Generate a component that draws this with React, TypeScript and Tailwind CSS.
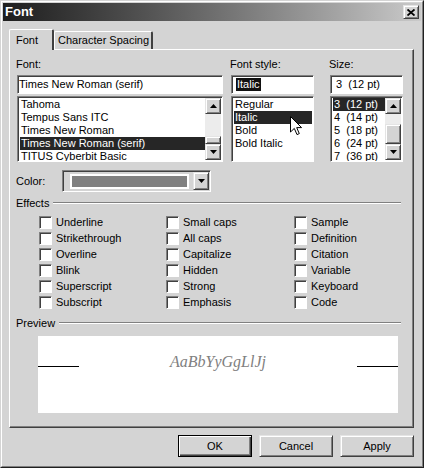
import React from "react";

const raised =
  "bg-[#d4d4d4] border border-t-[#e4e4e4] border-l-[#e4e4e4] border-r-[#404040] border-b-[#404040] shadow-[inset_1px_1px_0_#ffffff,inset_-1px_-1px_0_#808080]";
const sunken =
  "bg-white border border-t-[#808080] border-l-[#808080] border-r-white border-b-white shadow-[inset_1px_1px_0_#404040]";

function Up() {
  return (
    <svg width="7" height="4" viewBox="0 0 7 4">
      <path d="M3.5 0 L7 4 L0 4 Z" fill="#000" />
    </svg>
  );
}
function Down() {
  return (
    <svg width="7" height="4" viewBox="0 0 7 4">
      <path d="M0 0 L7 0 L3.5 4 Z" fill="#000" />
    </svg>
  );
}

function ScrollBar({ before, thumb }: { before: number; thumb: number }) {
  return (
    <div className="w-[16px] h-full flex flex-col shrink-0">
      <div className={`${raised} h-[16px] flex items-center justify-center shrink-0`}>
        <Up />
      </div>
      <div className="bg-[#ececec]" style={{ height: before }} />
      <div className={`${raised} shrink-0`} style={{ height: thumb }} />
      <div className="bg-[#ececec] flex-1" />
      <div className={`${raised} h-[16px] flex items-center justify-center shrink-0`}>
        <Down />
      </div>
    </div>
  );
}

function ListBox({
  items,
  selected,
  scroll,
  width,
}: {
  items: string[];
  selected: number;
  scroll?: { before: number; thumb: number };
  width: string;
}) {
  return (
    <div className={`${sunken} ${width} h-[66px] mt-[2px] p-[1px] pl-[1px] flex overflow-hidden`}>
      <div className="flex-1 flex flex-col pl-[1px]">
        {items.map((t, i) => (
          <div
            key={t}
            className={`h-[13px] leading-[13px] pl-[1px] whitespace-pre ${
              i === selected ? "bg-[#262626] text-white" : "text-black"
            }`}
          >
            {t}
          </div>
        ))}
      </div>
      {scroll && <ScrollBar before={scroll.before} thumb={scroll.thumb} />}
    </div>
  );
}

function Check({ label }: { label: string }) {
  return (
    <div className="h-[16px] flex items-center">
      <div className="w-[13px] h-[13px] bg-white border border-t-[#808080] border-l-[#808080] border-r-white border-b-white shadow-[inset_1px_1px_0_#404040]" />
      <span className="ml-[4px]">{label}</span>
    </div>
  );
}

function Btn({ label, def }: { label: string; def?: boolean }) {
  return (
    <div
      className={`w-[74px] h-[22px] flex items-center justify-center ${
        def
          ? "bg-[#d4d4d4] border border-black shadow-[inset_1px_1px_0_#ffffff,inset_-1px_-1px_0_#404040,inset_-2px_-2px_0_#808080]"
          : raised
      }`}
    >
      {label}
    </div>
  );
}

export default function App() {
  const col1 = ["Underline", "Strikethrough", "Overline", "Blink", "Superscript", "Subscript"];
  const col2 = ["Small caps", "All caps", "Capitalize", "Hidden", "Strong", "Emphasis"];
  const col3 = ["Sample", "Definition", "Citation", "Variable", "Keyboard", "Code"];
  return (
    <div className="relative w-[424px] h-[468px] bg-[#d4d4d4] text-[11px] text-black font-['Liberation_Sans',Arial,sans-serif] border border-t-[#d4d4d4] border-l-[#d4d4d4] border-r-[#202020] border-b-[#202020] overflow-hidden">
      <div className="w-full h-full border border-t-white border-l-white border-r-[#808080] border-b-[#808080] p-[1px] flex flex-col">
        {/* title bar */}
        <div className="h-[18px] shrink-0 bg-linear-to-r from-[#1e1e1e] to-[#cacaca] flex items-center justify-between">
          <span className="pl-[2px] text-white font-bold text-[13px] leading-[18px]">Font</span>
          <div className={`${raised} w-[16px] h-[14px] mr-[2px] flex items-center justify-center`}>
            <svg width="8" height="7" viewBox="0 0 8 7">
              <path d="M0.5 0.5 L7.5 6.5 M7.5 0.5 L0.5 6.5" stroke="#000" strokeWidth="1.8" />
            </svg>
          </div>
        </div>

        <div className="pl-[6px] pr-[6px] pt-[8px] flex flex-col">
          {/* tabs */}
          <div className="h-[20px] flex items-end">
            <div className="relative z-10 -mb-px w-[45px] h-[21px] bg-[#d4d4d4] border-t border-l border-t-white border-l-white border-r-2 border-r-[#404040] rounded-t-[2px] flex items-center pl-[6px]">
              Font
            </div>
            <div className="w-[99px] h-[18px] bg-[#d4d4d4] border-t border-l border-t-white border-l-white border-r-2 border-r-[#404040] rounded-t-[2px] flex items-center pl-[3px]">
              Character Spacing
            </div>
          </div>

          {/* panel */}
          <div className="w-[405px] h-[379px] border-t border-l border-t-white border-l-white border-r border-b border-r-[#404040] border-b-[#404040] shadow-[inset_-1px_-1px_0_#808080] pl-[7px] pt-[7px] flex flex-col">
            <div className="flex">
              <div className="w-[206px] flex flex-col">
                <div className="h-[14px] leading-[14px] -ml-px">Font:</div>
                <div className={`${sunken} mt-[4px] h-[19px] leading-[17px] pl-[1px]`}>Times New Roman (serif)</div>
                <ListBox
                  width="w-[206px]"
                  items={["Tahoma", "Tempus Sans ITC", "Times New Roman", "Times New Roman (serif)", "TITUS Cyberbit Basic"]}
                  selected={3}
                  scroll={{ before: 22, thumb: 8 }}
                />
              </div>
              <div className="ml-[8px] w-[83px] flex flex-col">
                <div className="h-[14px] leading-[14px] -ml-px">Font style:</div>
                <div className={`${sunken} mt-[4px] h-[19px] pl-[4px] flex items-center`}>
                  <span className="bg-[#111111] text-white leading-[13px] px-px">Italic</span>
                </div>
                <ListBox width="w-[83px]" items={["Regular", "Italic", "Bold", "Bold Italic"]} selected={1} />
              </div>
              <div className="ml-[16px] w-[73px] flex flex-col">
                <div className="h-[14px] leading-[14px] -ml-px">Size:</div>
                <div className={`${sunken} mt-[4px] h-[19px] leading-[17px] pl-[5px] whitespace-pre`}>3  (12 pt)</div>
                <ListBox
                  width="w-[73px]"
                  items={["3  (12 pt)", "4  (14 pt)", "5  (18 pt)", "6  (24 pt)", "7  (36 pt)"]}
                  selected={0}
                  scroll={{ before: 10, thumb: 20 }}
                />
              </div>
            </div>

            {/* color */}
            <div className="mt-[8px] h-[22px] flex items-center">
              <div className="w-[46px] -ml-px">Color:</div>
              <div className="w-[149px] h-[22px] bg-[#d4d4d4] border border-t-[#808080] border-l-[#808080] border-r-white border-b-white shadow-[inset_1px_1px_0_#404040] flex items-center pl-[7px] pr-px">
                <div className="w-[119px] h-[15px] border-2 border-white bg-[#808080]" />
                <div className="flex-1" />
                <div className={`${raised} w-[16px] h-[18px] flex items-center justify-center`}>
                  <Down />
                </div>
              </div>
            </div>

            {/* effects */}
            <div className="mt-[4px] h-[14px] w-[385px] -ml-px flex items-center">
              <span>Effects</span>
              <div className="flex-1 ml-[4px] h-[2px] border-t border-t-[#808080] border-b border-b-white" />
            </div>
            <div className="mt-[4px] ml-[22px] flex">
              <div className="w-[127px] flex flex-col">
                {col1.map((c) => (
                  <Check key={c} label={c} />
                ))}
              </div>
              <div className="w-[128px] flex flex-col">
                {col2.map((c) => (
                  <Check key={c} label={c} />
                ))}
              </div>
              <div className="w-[110px] flex flex-col">
                {col3.map((c) => (
                  <Check key={c} label={c} />
                ))}
              </div>
            </div>

            {/* preview */}
            <div className="mt-[6px] h-[14px] w-[385px] -ml-px flex items-center">
              <span>Preview</span>
              <div className="flex-1 ml-[4px] h-[2px] border-t border-t-[#808080] border-b border-b-white" />
            </div>
            <div className="mt-[6px] ml-[21px] w-[360px] h-[77px] bg-white pt-[16px]">
              <div className="flex items-start h-[20px]">
                <div className="w-[41px] h-px bg-black mt-[14px]" />
                <div className="flex-1 text-center text-[16px] leading-[20px] italic text-[#808080] font-['Liberation_Serif','Times_New_Roman',serif]">
                  AaBbYyGgLlJj
                </div>
                <div className="w-[41px] h-px bg-black mt-[14px]" />
              </div>
            </div>
          </div>

          {/* buttons */}
          <div className="mt-[7px] w-[405px] flex justify-end gap-[7px]">
            <Btn label="OK" def />
            <Btn label="Cancel" />
            <Btn label="Apply" />
          </div>
        </div>
      </div>

      {/* mouse cursor */}
      <svg className="absolute left-[289px] top-[115px]" width="13" height="20" viewBox="0 0 13 20">
        <path
          d="M0.5 0.5 L0.5 16 L4.3 12.4 L7 18.6 L9.3 17.6 L6.7 11.6 L11.6 11.6 Z"
          fill="#fff"
          stroke="#000"
          strokeWidth="1"
          strokeLinejoin="miter"
        />
      </svg>
    </div>
  );
}
